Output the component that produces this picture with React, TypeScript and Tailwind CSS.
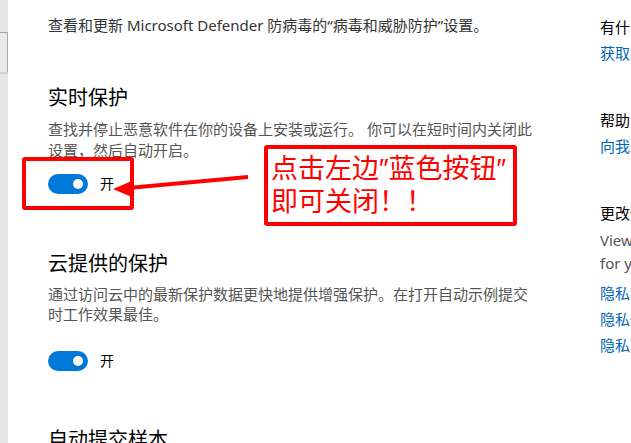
import React from "react";

const cjk = { fontFamily: '"Segoe UI", "Noto Sans", "Noto Sans CJK SC", sans-serif' };

function Toggle() {
  return (
    <div className="flex items-center gap-3">
      <div className="flex h-5 w-10 items-center justify-end rounded-full bg-[#0078d7] pr-[5px]">
        <div className="h-[10px] w-[10px] rounded-full bg-white" />
      </div>
      <span className="text-[14px] leading-5 text-black">开</span>
    </div>
  );
}

function SideGroup({ title, children }: { title: string; children: React.ReactNode }) {
  return (
    <div>
      <div className="text-[15px] leading-[21px] text-black">{title}</div>
      <div className="mt-[5px]">{children}</div>
    </div>
  );
}

export default function App() {
  return (
    <div
      className="relative flex h-[443px] w-[631px] overflow-hidden bg-white whitespace-nowrap"
      style={cjk}
    >
      {/* left nav edge */}
      <div className="w-[8px] shrink-0 bg-[#e6e6e6] pt-[32px]">
        <div className="h-[40px] border-t border-r border-[#a8a8a8] bg-[#e9e9e9]" />
        <div className="h-[2px] bg-[#d2d2d2]" />
      </div>

      {/* main column */}
      <div className="w-[552px] shrink-0 pl-[40px] pt-[15px]">
        <p className="text-[15px] leading-[21px] text-[#333333]">
          查看和更新 Microsoft Defender 防病毒的“病毒和威胁防护”设置。
        </p>

        <h2 className="mt-[48px] text-[20px] leading-[28px] text-black">实时保护</h2>
        <p className="mt-[7px] text-[15px] leading-[21px] text-[#555555]">
          查找并停止恶意软件在你的设备上安装或运行。 你可以在短时间内关闭此
          <br />
          设置，然后自动开启。
        </p>
        <div className="mt-[13px]">
          <Toggle />
        </div>

        <h2 className="mt-[56px] text-[20px] leading-[28px] text-black">云提供的保护</h2>
        <p className="mt-[6px] text-[15px] leading-[20px] text-[#555555]">
          通过访问云中的最新保护数据更快地提供增强保护。在打开自动示例提交
          <br />
          时工作效果最佳。
        </p>
        <div className="mt-[27px]">
          <Toggle />
        </div>

        <h2 className="mt-[55px] text-[20px] leading-[28px] text-black">自动提交样本</h2>
      </div>

      {/* right column */}
      <div className="flex shrink-0 flex-col gap-[46px] pl-[40px] pt-[17px]">
        <SideGroup title="有什么疑问?">
          <div className="text-[15px] leading-[21px] text-[#0067b8]">获取帮助</div>
        </SideGroup>
        <SideGroup title="帮助改进 Windows 安全中心">
          <div className="text-[15px] leading-[21px] text-[#0067b8]">向我们提供反馈</div>
        </SideGroup>
        <SideGroup title="更改你的隐私设置">
          <div className="text-[15px] leading-[23px] text-[#555555]">
            View and change privacy settings
            <br />
            for your Windows 10 device.
          </div>
          <div className="mt-[8px] flex flex-col gap-[5px] text-[15px] leading-[21px] text-[#0067b8]">
            <span>隐私设置</span>
            <span>隐私仪表板</span>
            <span>隐私声明</span>
          </div>
        </SideGroup>
      </div>

      {/* annotation overlay */}
      <div className="absolute left-[22px] top-[157px] h-[53px] w-[112px] rounded-[3px] border-4 border-[#ff0000]" />
      <div className="absolute left-[264px] top-[145px] flex h-[81px] w-[253px] flex-col rounded-[3px] border-4 border-[#ff0000] pl-[3px] pt-[3px] text-[27px] leading-[32px] text-[#ff0000]">
        <span>
          点击左边<span className="font-['Liberation_Sans']">″</span>蓝色按钮
          <span className="font-['Liberation_Sans']">″</span>
        </span>
        <span>即可关闭！！</span>
      </div>
      <svg className="absolute left-0 top-0" width="631" height="443">
        <line x1="248" y1="177" x2="128" y2="188" stroke="#ff0000" strokeWidth="4" />
        <polygon points="113,189 134,180 134,198" fill="#ff0000" />
      </svg>
    </div>
  );
}
